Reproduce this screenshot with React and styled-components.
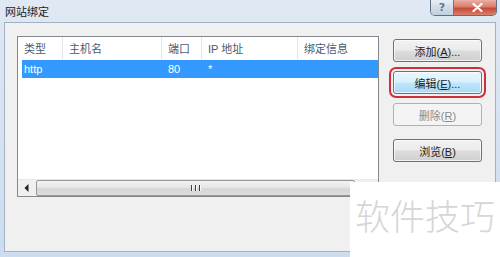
import styled, { createGlobalStyle, css } from 'styled-components';

const GlobalStyle = createGlobalStyle`
  html, body {
    margin: 0;
    padding: 0;
    background: #ffffff;
  }
  body {
    font-family: "Liberation Sans", "Noto Sans CJK SC", sans-serif;
  }
`;

const columns = [
  { title: '类型', width: 45 },
  { title: '主机名', width: 99 },
  { title: '端口', width: 40 },
  { title: 'IP 地址', width: 96 },
  { title: '绑定信息', width: 120 }
];

const rows = [{ cells: ['http', '', '80', '*', ''] }];

export default function App() {
  return (
    <>
      <GlobalStyle />
      <Window>
        <TitleBar>
          <Title>网站绑定</Title>
          <CaptionButtons>
            <HelpButton>?</HelpButton>
            <CloseButton>
              <svg width="11" height="9" viewBox="0 0 11 9">
                <path d="M1.5 1 L9.5 8 M9.5 1 L1.5 8" stroke="#fff" strokeWidth="2.2" strokeLinecap="round" />
              </svg>
            </CloseButton>
          </CaptionButtons>
        </TitleBar>
        <Client>
          <ListView>
            <HeaderRow>
              {columns.map((c) => (
                <HeaderCell key={c.title} $width={c.width}>
                  {c.title}
                </HeaderCell>
              ))}
            </HeaderRow>
            {rows.map((r, i) => (
              <Row key={i} $selected>
                {r.cells.map((cell, j) => (
                  <Cell key={j} $width={columns[j].width}>
                    {cell}
                  </Cell>
                ))}
              </Row>
            ))}
            <ListFill />
            <ScrollBar>
              <ArrowButton>
                <svg width="5" height="8" viewBox="0 0 5 8">
                  <path d="M4.5 0 L0.5 4 L4.5 8 Z" fill="#222" />
                </svg>
              </ArrowButton>
              <Thumb>
                <Grip>
                  <span />
                  <span />
                  <span />
                </Grip>
              </Thumb>
              <ArrowButton />
            </ScrollBar>
          </ListView>
          <ButtonColumn>
            <Button>
              添加(<u>A</u>)...
            </Button>
            <Button $hot $marked>
              编辑(<u>E</u>)...
            </Button>
            <Button disabled>
              删除(<u>R</u>)
            </Button>
            <Button $spaced>
              浏览(<u>B</u>)
            </Button>
          </ButtonColumn>
        </Client>
        <Watermark>软件技巧</Watermark>
      </Window>
    </>
  );
}

const Window = styled.div`
  position: relative;
  width: 500px;
  height: 257px;
  overflow: hidden;
  display: flex;
  flex-direction: column;
  background: linear-gradient(180deg, #dfe8f3 0%, #cddcee 100%);
`;

const TitleBar = styled.div`
  height: 22px;
  display: flex;
  align-items: flex-start;
  padding-left: 5px;
`;

const Title = styled.div`
  margin-top: 5px;
  font-family: "Noto Sans CJK SC", sans-serif;
  font-size: 11px;
  line-height: 13px;
  color: #1b1b1b;
`;

const CaptionButtons = styled.div`
  margin-left: auto;
  margin-right: 3px;
  display: flex;
  height: 15px;
  border: 1px solid #5f6f82;
  border-top: none;
  border-radius: 0 0 5px 5px;
  overflow: hidden;
`;

const HelpButton = styled.div`
  width: 22px;
  display: flex;
  align-items: center;
  justify-content: center;
  background: linear-gradient(180deg, #e8eef5 0%, #d2dce8 50%, #c3cfdd 100%);
  border-right: 1px solid #6a7a8c;
  font-family: "DejaVu Sans", sans-serif;
  font-size: 11px;
  font-weight: bold;
  color: #66768a;
`;

const CloseButton = styled.div`
  width: 42px;
  display: flex;
  align-items: center;
  justify-content: center;
  padding-left: 4px;
  box-sizing: border-box;
  background: linear-gradient(180deg, #e9b0a4 0%, #da7f6c 45%, #c64a37 55%, #d8806c 100%);
`;

const Client = styled.div`
  flex: 1;
  margin: 0 4px 5px 4px;
  border: 1px solid #9fb2c8;
  background: #f0f0f0;
  display: flex;
  align-items: flex-start;
  padding: 13px 13px 0 12px;
`;

const ListView = styled.div`
  width: 362px;
  height: 161px;
  box-sizing: border-box;
  border: 1px solid #828790;
  background: #ffffff;
  display: flex;
  flex-direction: column;
  font-size: 11px;
`;

const HeaderRow = styled.div`
  height: 22px;
  display: flex;
  flex-shrink: 0;
`;

const HeaderCell = styled.div`
  width: ${(p) => p.$width}px;
  flex-shrink: 0;
  box-sizing: border-box;
  padding: 0 0 0 6px;
  border-right: 1px solid #e3e6ea;
  display: flex;
  align-items: center;
  color: #4a5a70;
  &:last-child {
    border-right: none;
  }
`;

const Row = styled.div`
  height: 18px;
  margin: 1px 0 0 4px;
  display: flex;
  ${(p) =>
    p.$selected &&
    css`
      background: #3399ff;
      color: #ffffff;
    `}
`;

const Cell = styled.div`
  width: ${(p) => p.$width}px;
  flex-shrink: 0;
  box-sizing: border-box;
  padding-left: 2px;
  display: flex;
  align-items: center;
  &:first-child {
    width: ${(p) => p.$width - 4}px;
  }
  &:nth-child(2) {
    padding-left: 4px;
  }
  &:nth-child(n + 3) {
    padding-left: 6px;
  }
`;

const ListFill = styled.div`
  flex: 1;
`;

const ScrollBar = styled.div`
  height: 16px;
  display: flex;
  background: #f0f0f0;
  border-top: 1px solid #e8e8e8;
`;

const ArrowButton = styled.div`
  width: 17px;
  display: flex;
  align-items: center;
  justify-content: center;
`;

const Thumb = styled.div`
  flex: 1;
  margin: 0 6px 0 1px;
  border: 1px solid #979797;
  border-radius: 2px;
  background: linear-gradient(180deg, #f3f3f3 0%, #e6e6e6 45%, #d6d6d6 55%, #dcdcdc 100%);
  display: flex;
  align-items: center;
  justify-content: center;
`;

const Grip = styled.div`
  display: flex;
  gap: 2px;
  span {
    width: 1px;
    height: 6px;
    background: #3e3e3e;
    border-right: 1px solid #f8f8f8;
  }
`;

const ButtonColumn = styled.div`
  margin: 3px 0 0 14px;
  display: flex;
  flex-direction: column;
  gap: 9px;
`;

const Button = styled.button`
  width: 89px;
  height: 23px;
  box-sizing: border-box;
  padding: 0;
  border: 1px solid #707070;
  border-radius: 3px;
  background: linear-gradient(180deg, #f2f2f2 0%, #ebebeb 48%, #dddddd 52%, #cfcfcf 100%);
  font-family: "Liberation Sans", "Noto Sans CJK SC", sans-serif;
  font-size: 11px;
  color: #1e1e1e;
  box-shadow: inset 0 0 0 1px rgba(255, 255, 255, 0.7);
  u {
    text-decoration: underline;
  }
  &:disabled {
    border-color: #adb2b5;
    background: #f4f4f4;
    color: #8a8a8a;
    box-shadow: none;
  }
  ${(p) =>
    p.$hot &&
    css`
      border-color: #3c7fb1;
      background: linear-gradient(180deg, #eaf6fd 0%, #d9f0fc 48%, #bee6fd 52%, #a7d9f5 100%);
    `}
  ${(p) =>
    p.$marked &&
    css`
      outline: 2px solid #cc3038;
      outline-offset: 2px;
    `}
  ${(p) =>
    p.$spaced &&
    css`
      margin-top: 4px;
    `}
`;

const Watermark = styled.div`
  position: absolute;
  left: 350px;
  top: 182px;
  width: 150px;
  height: 75px;
  box-sizing: border-box;
  padding: 15px 0 0 5px;
  background: #ffffff;
  font-family: "Noto Sans CJK SC", sans-serif;
  font-size: 35px;
  font-weight: 300;
  line-height: 35px;
  color: #d6d6d6;
  white-space: nowrap;
`;
